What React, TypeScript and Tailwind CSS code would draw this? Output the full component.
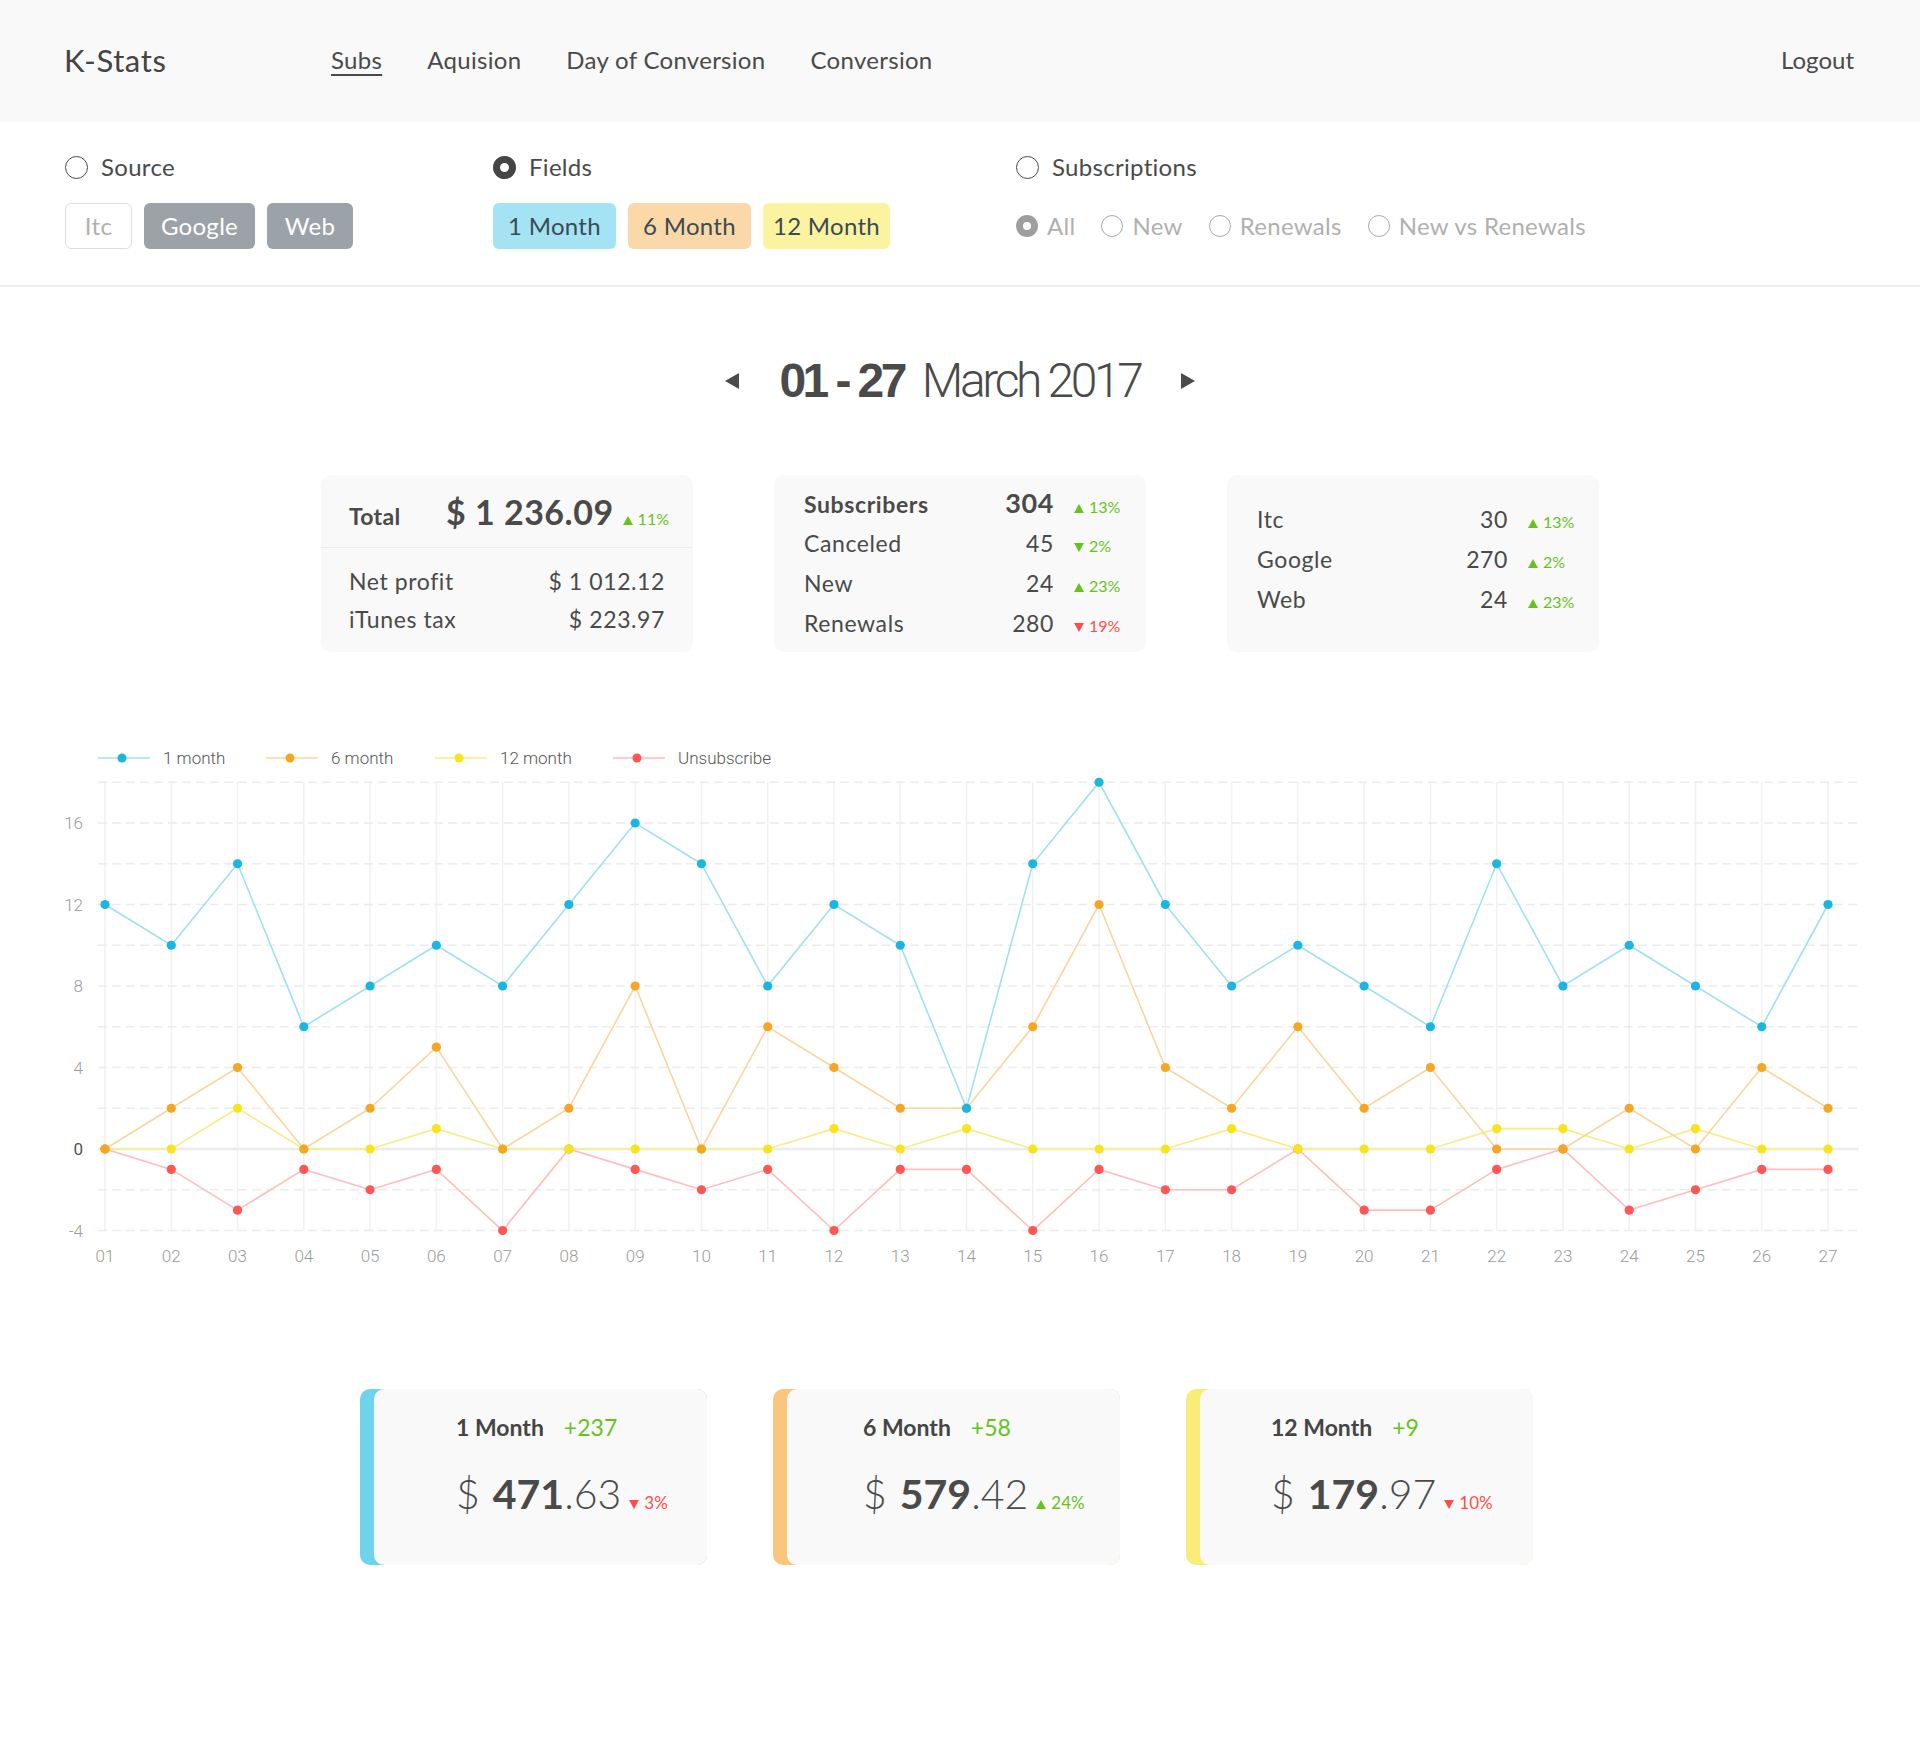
import React from "react";

const GREEN = "#66c31c";
const RED = "#ff4d4d";

function Tri({ up, color, w = 9 }: { up: boolean; color: string; w?: number }) {
  const h = Math.round(w * 0.9);
  return (
    <svg width={w} height={h} viewBox="0 0 10 9" className="inline-block">
      {up ? <polygon points="5,0 10,9 0,9" fill={color} /> : <polygon points="0,0 10,0 5,9" fill={color} />}
    </svg>
  );
}

function Pct({ up, value, color, size = 16 }: { up: boolean; value: string; color: string; size?: number }) {
  return (
    <span className="inline-flex items-baseline gap-[5px] tracking-normal" style={{ color, fontSize: size }}>
      <Tri up={up} color={color} w={Math.round(size * 0.6)} />
      <span>{value}</span>
    </span>
  );
}

function Radio({ kind }: { kind: "empty" | "dark" | "gray" | "emptyGray" }) {
  if (kind === "dark")
    return <span className="inline-block w-[23px] h-[23px] rounded-full border-[7.5px] border-[#454545] bg-white" />;
  if (kind === "gray")
    return <span className="inline-block w-[22px] h-[22px] rounded-full border-[7px] border-[#9e9e9e] bg-white" />;
  if (kind === "emptyGray")
    return <span className="inline-block w-[22px] h-[22px] rounded-full border-[1.5px] border-[#a8a8a8] bg-white" />;
  return <span className="inline-block w-[23px] h-[23px] rounded-full border-[1.5px] border-[#3f4a50] bg-white" />;
}

const blue = [12, 10, 14, 6, 8, 10, 8, 12, 16, 14, 8, 12, 10, 2, 14, 18, 12, 8, 10, 8, 6, 14, 8, 10, 8, 6, 12];
const orange = [0, 2, 4, 0, 2, 5, 0, 2, 8, 0, 6, 4, 2, 2, 6, 12, 4, 2, 6, 2, 4, 0, 0, 2, 0, 4, 2];
const yellow = [0, 0, 2, 0, 0, 1, 0, 0, 0, 0, 0, 1, 0, 1, 0, 0, 0, 1, 0, 0, 0, 1, 1, 0, 1, 0, 0];
const red = [0, -1, -3, -1, -2, -1, -4, 0, -1, -2, -1, -4, -1, -1, -4, -1, -2, -2, 0, -3, -3, -1, 0, -3, -2, -1, -1];

const X = (i: number) => 105 + i * 66.27;
const Y = (v: number) => 449 - v * 20.375;

const series = [
  { data: red, dot: "#ff5656", line: "#ffbdbd" },
  { data: yellow, dot: "#f8e41c", line: "#f9ec86" },
  { data: orange, dot: "#f5a623", line: "#fbd49e" },
  { data: blue, dot: "#1bb6e0", line: "#a0e0f1" },
];

const legend = [
  { x: 98, label: "1 month", dot: "#1bb6e0", line: "#a0e0f1" },
  { x: 266, label: "6 month", dot: "#f5a623", line: "#fbd49e" },
  { x: 435, label: "12 month", dot: "#f8e41c", line: "#f9ec86" },
  { x: 613, label: "Unsubscribe", dot: "#ff5656", line: "#ffbdbd" },
];

function Chart() {
  const grid = [];
  for (let v = -4; v <= 18; v += 2) grid.push(v);
  return (
    <svg width="1920" height="600" viewBox="0 0 1920 600" className="block">
      {legend.map((l) => (
        <g key={l.label}>
          <line x1={l.x} y1={58} x2={l.x + 52} y2={58} stroke={l.line} strokeWidth={1.5} />
          <circle cx={l.x + 24} cy={58} r={4.5} fill={l.dot} />
          <text x={l.x + 65} y={64} fontSize={17} fill="#555" fontFamily="Roboto, sans-serif" fontWeight={300}>
            {l.label}
          </text>
        </g>
      ))}
      {blue.map((_, i) => (
        <line key={"v" + i} x1={X(i)} y1={82} x2={X(i)} y2={531} stroke="#f1f1f1" strokeWidth={1.5} />
      ))}
      {grid.map((v) =>
        v === 0 ? (
          <line key={"h" + v} x1={98} y1={Y(v)} x2={1859} y2={Y(v)} stroke="#ececec" strokeWidth={2.5} />
        ) : (
          <line key={"h" + v} x1={98} y1={Y(v)} x2={1859} y2={Y(v)} stroke="#ececec" strokeWidth={1.5} strokeDasharray="9 5" />
        )
      )}
      {[16, 12, 8, 4, 0, -4].map((v) => (
        <text
          key={"y" + v}
          x={83}
          y={Y(v) + 6}
          textAnchor="end"
          fontSize={17}
          fill={v === 0 ? "#555" : "#9b9b9b"}
          fontFamily="Roboto, sans-serif"
          fontWeight={v === 0 ? 400 : 300}
        >
          {v}
        </text>
      ))}
      {blue.map((_, i) => (
        <text
          key={"x" + i}
          x={X(i)}
          y={562}
          textAnchor="middle"
          fontSize={17}
          fill="#9b9b9b"
          fontFamily="Roboto, sans-serif"
          fontWeight={300}
        >
          {String(i + 1).padStart(2, "0")}
        </text>
      ))}
      {series.map((s, si) => (
        <g key={"s" + si}>
          <polyline
            points={s.data.map((v, i) => `${X(i)},${Y(v)}`).join(" ")}
            fill="none"
            stroke={s.line}
            strokeWidth={1.6}
          />
          {s.data.map((v, i) => (
            <circle key={i} cx={X(i)} cy={Y(v)} r={4.6} fill={s.dot} />
          ))}
        </g>
      ))}
    </svg>
  );
}

function Row({ label, value, pct, up, color, bold }: { label: string; value: string; pct: string; up: boolean; color: string; bold?: boolean }) {
  return (
    <div className="flex items-baseline h-[40px] leading-[40px] tracking-[0.6px]">
      <span className={bold ? "flex-1 font-bold text-[23px]" : "flex-1 text-[23px]"}>{label}</span>
      <span className={bold ? "font-bold text-[27px]" : "text-[23px]"}>{value}</span>
      <span className="w-[52px] ml-[20px]">
        <Pct up={up} value={pct} color={color} size={16} />
      </span>
    </div>
  );
}

function PlanCard({ color, title, plus, whole, cents, pct, up, pctColor, pl }: { color: string; title: string; plus: string; whole: string; cents: string; pct: string; up: boolean; pctColor: string; pl: string }) {
  return (
    <div className="w-[347px] h-[176px] rounded-[10px] flex" style={{ backgroundColor: color }}>
      <div className={"ml-[14px] flex-1 rounded-[10px] bg-[#f9f9f9] " + pl}>
        <div className="pt-[27px] flex items-baseline gap-[20px] text-[23px] leading-none">
          <span className="font-bold text-[#454545]">{title}</span>
          <span style={{ color: GREEN }}>{plus}</span>
        </div>
        <div className="mt-[34px] flex items-baseline text-[41px] leading-none text-[#4a4a4a]">
          <span className="font-light">$</span>
          <span className="font-bold ml-[13px]">{whole}</span>
          <span className="font-light">.{cents}</span>
          <span className="ml-[8px]">
            <Pct up={up} value={pct} color={pctColor} size={17} />
          </span>
        </div>
      </div>
    </div>
  );
}

export default function App() {
  return (
    <div className="min-h-[1751px] bg-white text-[#4a4a4a] font-['Lato',sans-serif]">
      {/* header */}
      <div className="h-[122px] bg-[#f9f9f9] flex items-center pl-[64px] pr-[66px] pb-[2px]">
        <div className="w-[267px] text-[31px] text-[#444] tracking-[0.02em]">K-Stats</div>
        <nav className="flex gap-[45px] text-[24px] text-[#4a4a4a] tracking-[0.3px]">
          <span className="underline underline-offset-[5px] decoration-[1.5px]">Subs</span>
          <span>Aquision</span>
          <span>Day of Conversion</span>
          <span>Conversion</span>
        </nav>
        <div className="ml-auto text-[24px]">Logout</div>
      </div>

      {/* filters */}
      <div className="flex px-[65px] pt-[31px] pb-[36px] border-b-2 border-[#ececec] tracking-[0.3px]">
        <div className="w-[428px]">
          <div className="h-[28px] flex items-center gap-[13px] text-[24px]">
            <Radio kind="empty" />
            <span>Source</span>
          </div>
          <div className="mt-[22px] flex gap-[12px] text-[24px]">
            <span className="h-[46px] w-[67px] flex items-center justify-center rounded-[6px] border-[1.5px] border-[#dedede] text-[#b0b0b0]">Itc</span>
            <span className="h-[46px] w-[111px] flex items-center justify-center rounded-[6px] bg-[#9ba3a8] text-white">Google</span>
            <span className="h-[46px] w-[86px] flex items-center justify-center rounded-[6px] bg-[#9ba3a8] text-white">Web</span>
          </div>
        </div>
        <div className="w-[523px]">
          <div className="h-[28px] flex items-center gap-[13px] text-[24px]">
            <Radio kind="dark" />
            <span>Fields</span>
          </div>
          <div className="mt-[22px] flex gap-[12px] text-[24px] text-[#3b4b53]">
            <span className="h-[46px] w-[123px] flex items-center justify-center rounded-[6px] bg-[#a3e3f3]">1 Month</span>
            <span className="h-[46px] w-[123px] flex items-center justify-center rounded-[6px] bg-[#fbd8a8]">6 Month</span>
            <span className="h-[46px] w-[127px] flex items-center justify-center rounded-[6px] bg-[#fcf3a1]">12 Month</span>
          </div>
        </div>
        <div>
          <div className="h-[28px] flex items-center gap-[13px] text-[24px]">
            <Radio kind="empty" />
            <span>Subscriptions</span>
          </div>
          <div className="mt-[22px] h-[46px] flex items-center gap-[26px] text-[24px] text-[#b0b0b0]">
            <span className="flex items-center gap-[9px]">
              <Radio kind="gray" />
              All
            </span>
            <span className="flex items-center gap-[9px]">
              <Radio kind="emptyGray" />
              New
            </span>
            <span className="flex items-center gap-[9px]">
              <Radio kind="emptyGray" />
              Renewals
            </span>
            <span className="flex items-center gap-[9px]">
              <Radio kind="emptyGray" />
              New vs Renewals
            </span>
          </div>
        </div>
      </div>

      {/* date */}
      <div className="mt-[66px] h-[56px] flex items-center justify-center text-[#4a4a4a]">
        <svg width="14" height="16" viewBox="0 0 14 16">
          <polygon points="14,0 14,16 0,8" fill="#4a4a4a" />
        </svg>
        <span className="ml-[41px] font-['Liberation_Sans',sans-serif] font-bold text-[48px] leading-none tracking-[-0.075em]">01 - 27</span>
        <span className="ml-[18px] font-['Roboto',sans-serif] font-light text-[48px] leading-none tracking-[-0.07em]">March 2017</span>
        <svg width="14" height="16" viewBox="0 0 14 16" className="ml-[41px]">
          <polygon points="0,0 0,16 14,8" fill="#4a4a4a" />
        </svg>
      </div>

      {/* stats cards */}
      <div className="mt-[66px] flex justify-center gap-[81px]">
        <div className="w-[372px] h-[177px] rounded-[10px] bg-[#f9f9f9]">
          <div className="h-[73px] pt-[20px] px-[28px] flex items-baseline border-b-[1.5px] border-[#ebebeb]">
            <span className="font-bold text-[23px] leading-none flex-1 tracking-[0.3px]">Total</span>
            <span className="font-bold text-[34px] leading-none tracking-[0.5px]">$ 1 236.09</span>
            <span className="ml-[9px] -mr-[4px]">
              <Pct up value="11%" color={GREEN} size={16} />
            </span>
          </div>
          <div className="pt-[14px] px-[28px] text-[23px] tracking-[0.6px]">
            <div className="flex justify-between h-[38px] leading-[38px]">
              <span>Net profit</span>
              <span>$ 1 012.12</span>
            </div>
            <div className="flex justify-between h-[38px] leading-[38px]">
              <span>iTunes tax</span>
              <span>$ 223.97</span>
            </div>
          </div>
        </div>

        <div className="w-[372px] h-[177px] rounded-[10px] bg-[#f9f9f9] pt-[8px] pl-[30px] pr-[20px]">
          <Row label="Subscribers" value="304" pct="13%" up color={GREEN} bold />
          <Row label="Canceled" value="45" pct="2%" up={false} color={GREEN} />
          <Row label="New" value="24" pct="23%" up color={GREEN} />
          <Row label="Renewals" value="280" pct="19%" up={false} color={RED} />
        </div>

        <div className="w-[372px] h-[177px] rounded-[10px] bg-[#f9f9f9] pt-[24px] pl-[30px] pr-[19px]">
          <Row label="Itc" value="30" pct="13%" up color={GREEN} />
          <Row label="Google" value="270" pct="2%" up color={GREEN} />
          <Row label="Web" value="24" pct="23%" up color={GREEN} />
        </div>
      </div>

      {/* chart */}
      <div className="mt-[48px]">
        <Chart />
      </div>

      {/* plan cards */}
      <div className="mt-[89px] pl-[360px] flex gap-[66px]">
        <PlanCard color="#6fd3ec" title="1 Month" plus="+237" whole="471" cents="63" pct="3%" up={false} pctColor={RED} pl="pl-[82px]" />
        <PlanCard color="#f8c67c" title="6 Month" plus="+58" whole="579" cents="42" pct="24%" up pctColor={GREEN} pl="pl-[76px]" />
        <PlanCard color="#f9ed78" title="12 Month" plus="+9" whole="179" cents="97" pct="10%" up={false} pctColor={RED} pl="pl-[71px]" />
      </div>
    </div>
  );
}
